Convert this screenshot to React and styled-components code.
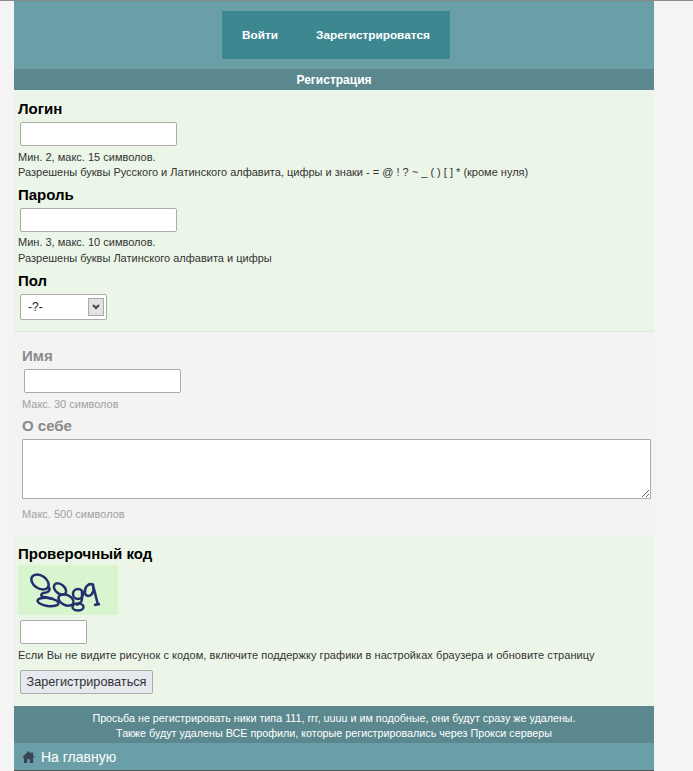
import React from 'react';
import styled, { createGlobalStyle } from 'styled-components';

const Global = createGlobalStyle`
  html, body { margin: 0; padding: 0; background: #f4f4f4; }
  body { font-family: "Liberation Sans", Arial, sans-serif; border-top: 1px solid #8a8a8a; }
`;

const Page = styled.div`
  width: 640px;
  margin-left: 14px;
  background: #f3f3f3;
`;

const Header = styled.div`
  height: 68px;
  background: #6a9fa8;
  display: flex;
  justify-content: center;
  padding: 10px 0 0 4px;
  box-sizing: border-box;
`;

const Nav = styled.div`
  width: 228px;
  height: 48px;
  background: #3d8890;
  display: flex;
  align-items: center;
`;

const NavLink = styled.a`
  color: #fff;
  font-size: 11.8px;
  font-weight: bold;
  margin-left: ${(p) => p.$gap}px;
  white-space: nowrap;
`;

const TitleBar = styled.div`
  height: 21px;
  line-height: 22px;
  background: #5b888e;
  color: #fff;
  font-size: 12px;
  font-weight: bold;
  text-align: center;
`;

const Section = styled.div`
  background: ${(p) => (p.$muted ? '#f3f3f3' : '#ecf6e8')};
  padding: ${(p) => p.$pad};
  ${(p) => p.$line && 'border-bottom: 1px solid #e3e8e0;'}
`;

const Label = styled.div`
  font-size: 15px;
  font-weight: bold;
  line-height: 17px;
  color: ${(p) => (p.$muted ? '#8a8a8a' : '#000')};
  margin-top: ${(p) => p.$top || 0}px;
`;

const TextInput = styled.input`
  display: block;
  box-sizing: border-box;
  width: ${(p) => p.$w}px;
  height: 24px;
  margin: ${(p) => p.$margin};
  border: 1px solid #aaa;
  border-radius: 2px;
  background: #fff;
  padding: 0 4px;
`;

const Hint = styled.div`
  font-size: 11px;
  line-height: 15px;
  color: ${(p) => (p.$muted ? '#a0a0a0' : '#333')};
  margin-top: ${(p) => p.$top || 0}px;
  letter-spacing: ${(p) => p.$track || 0}px;
`;

const SelectWrap = styled.div`
  position: relative;
  width: 87px;
  height: 26px;
  margin: 5px 0 0 2px;
`;

const Select = styled.select`
  appearance: none;
  width: 100%;
  height: 100%;
  box-sizing: border-box;
  border: 1px solid #aaa;
  border-radius: 2px;
  background: #fff;
  padding: 0 7px;
  font: 12px "Liberation Sans", Arial, sans-serif;
  color: #222;
`;

const SelectArrow = styled.span`
  position: absolute;
  top: 4px;
  right: 3px;
  width: 16px;
  height: 18px;
  box-sizing: border-box;
  border: 1px solid #aaa;
  background: #e2e2e2;
  display: flex;
  align-items: center;
  justify-content: center;
  pointer-events: none;
`;

const Area = styled.textarea`
  display: block;
  box-sizing: border-box;
  width: 629px;
  height: 60px;
  margin: 5px 0 0;
  border: 1px solid #aaa;
  border-radius: 1px;
  background: #fff;
`;

const Captcha = styled.svg`
  display: block;
  margin-top: 3px;
`;

const Submit = styled.button`
  display: block;
  box-sizing: border-box;
  width: 133px;
  height: 24px;
  margin: 7px 0 0 2px;
  padding: 0;
  border: 1px solid #aaa;
  border-radius: 2px;
  background: #e6e9ee;
  color: #333;
  font: 12.7px "Liberation Sans", Arial, sans-serif;
`;

const Notice = styled.div`
  background: #5b888e;
  color: #fff;
  font-size: 10.75px;
  line-height: 15px;
  text-align: center;
  padding: 5px 0 2px;
`;

const HomeBar = styled.div`
  height: 28px;
  background: #6a9fa8;
  color: #fff;
  font-size: 14px;
  display: flex;
  align-items: center;
  gap: 6px;
  padding-left: 8px;
  border-bottom: 1px solid #555;
  box-sizing: border-box;
`;

export default function App() {
  return (
    <>
      <Global />
      <Page>
        <Header>
          <Nav>
            <NavLink $gap={20}>Войти</NavLink>
            <NavLink $gap={38}>Зарегистрироватся</NavLink>
          </Nav>
        </Header>
        <TitleBar>Регистрация</TitleBar>

        <Section $pad="10px 4px 11px" $line>
          <Label>Логин</Label>
          <TextInput $w={157} $margin="5px 0 0 2px" />
          <Hint $top={4}>Мин. 2, макс. 15 символов.</Hint>
          <Hint>Разрешены буквы Русского и Латинского алфавита, цифры и знаки - = @ ! ? ~ _ ( ) [ ] * (кроме нуля)</Hint>
          <Label $top={6}>Пароль</Label>
          <TextInput $w={157} $margin="5px 0 0 2px" />
          <Hint $top={3}>Мин. 3, макс. 10 символов.</Hint>
          <Hint $top={1}>Разрешены буквы Латинского алфавита и цифры</Hint>
          <Label $top={6}>Пол</Label>
          <SelectWrap>
            <Select defaultValue="-?-">
              <option>-?-</option>
            </Select>
            <SelectArrow>
              <svg width="8" height="6" viewBox="0 0 8 6">
                <path d="M1 1l3 3 3-3" fill="none" stroke="#444" strokeWidth="2" />
              </svg>
            </SelectArrow>
          </SelectWrap>
        </Section>

        <Section $muted $pad="15px 4px 13px 8px">
          <Label $muted>Имя</Label>
          <TextInput $w={157} $margin="5px 0 0 2px" />
          <Hint $muted $top={4}>Макс. 30 символов</Hint>
          <Label $muted $top={5}>О себе</Label>
          <Area />
          <Hint $muted $top={8}>Макс. 500 символов</Hint>
        </Section>

        <Section $pad="10px 4px 12px">
          <Label>Проверочный код</Label>
          <Captcha width="100" height="50" viewBox="0 0 100 50">
            <rect width="100" height="50" fill="#d9f5d0" />
            <g fill="none" stroke="#22306c" strokeWidth="2.5">
              <ellipse cx="22" cy="17" rx="9.5" ry="6.5" transform="rotate(35 22 17)" />
              <path d="M31 22c2 4-2 6-6 6-3 2-2 4 2 4l8 2" />
              <ellipse cx="30" cy="37" rx="10.5" ry="4" transform="rotate(8 30 37)" />
              <ellipse cx="42" cy="24" rx="7" ry="4.5" transform="rotate(40 42 24)" />
              <ellipse cx="48" cy="35" rx="8" ry="5" transform="rotate(25 48 35)" />
              <ellipse cx="60" cy="29" rx="5" ry="5" />
              <path d="M64 26v8c0 3-3 5-6 6" />
              <ellipse cx="60" cy="42" rx="5.5" ry="3.5" />
              <path d="M76 20c-6-3-10 3-9 8 1 4 6 4 8-1 1-3 0-5 0-7l5 20" />
              <path d="M76 40l6-1" />
            </g>
          </Captcha>
          <TextInput $w={67} $margin="5px 0 0 2px" />
          <Hint $top={4} $track={0.06}>Если Вы не видите рисунок с кодом, включите поддержку графики в настройках браузера и обновите страницу</Hint>
          <Submit>Зарегистрироваться</Submit>
        </Section>

        <Notice>
          <div>Просьба не регистрировать ники типа 111, rrr, uuuu и им подобные, они будут сразу же удалены.</div>
          <div>Также будут удалены ВСЕ профили, которые регистрировались через Прокси серверы</div>
        </Notice>
        <HomeBar>
          <svg width="13" height="12" viewBox="0 0 14 13">
            <path d="M7 0L0 7h2v6h3.6V9h2.8v4H12V7h2l-2-2V1.5h-2v1.5z" fill="#3c4458" />
          </svg>
          На главную
        </HomeBar>
      </Page>
    </>
  );
}
